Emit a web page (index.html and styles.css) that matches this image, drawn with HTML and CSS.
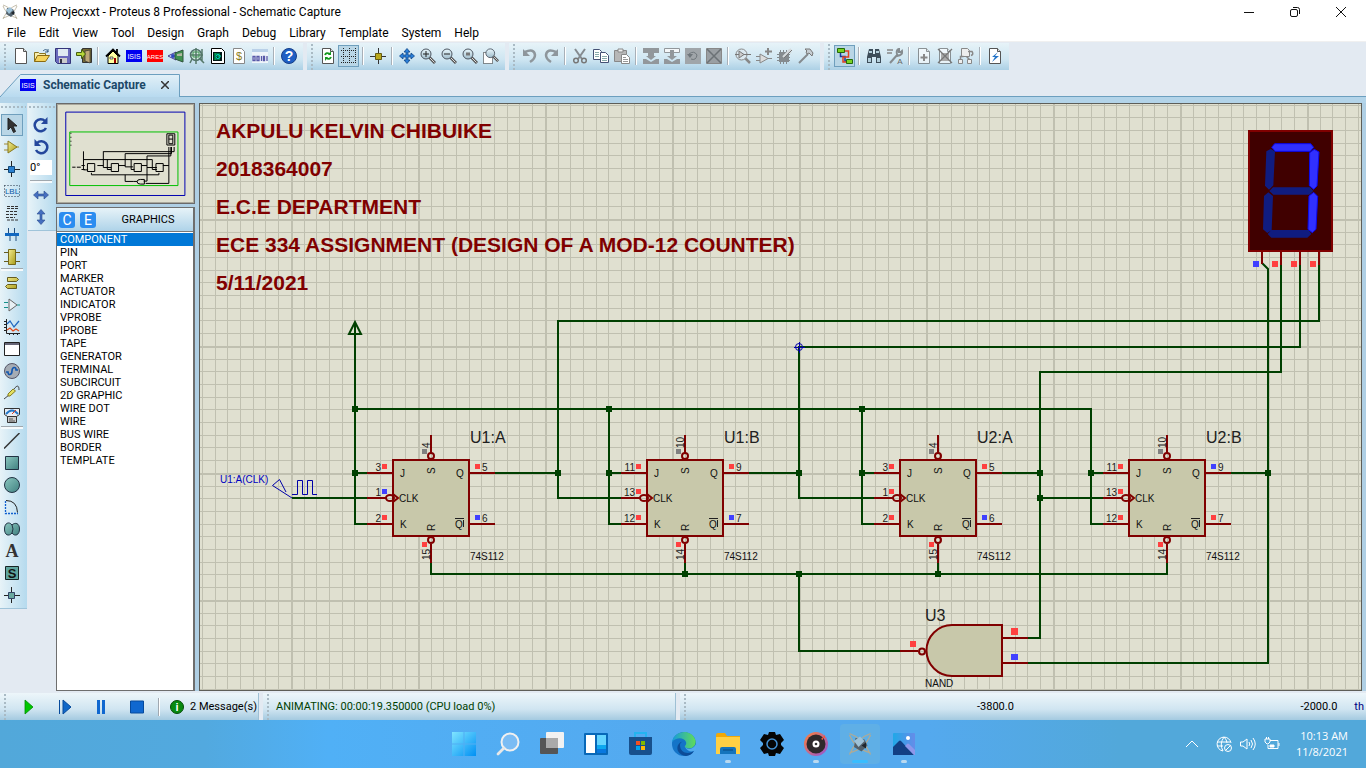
FILE: index.html
```html
<!DOCTYPE html>
<html lang="en">
<head>
<meta charset="utf-8">
<title>New Projecxxt - Proteus 8 Professional - Schematic Capture</title>
<link rel="stylesheet" href="styles.css">
</head>
<body>
<svg class="defs" aria-hidden="true">
  <defs>
    <linearGradient id="glass" x1="0" y1="0" x2="0" y2="1"><stop offset="0" stop-color="#eaf8fd"/><stop offset="1" stop-color="#9fbccb"/></linearGradient>
    <linearGradient id="teal" x1="0" y1="0" x2="1" y2="1"><stop offset="0" stop-color="#8cc8c0"/><stop offset="1" stop-color="#3f8080"/></linearGradient>
    <linearGradient id="gold" x1="0" y1="0" x2="1" y2="1"><stop offset="0" stop-color="#f4ec90"/><stop offset="1" stop-color="#a89c18"/></linearGradient>
    <symbol id="page" viewBox="0 0 16 16"><path d="M2.500 .500h8l3 3v12h-11z" fill="#fff" stroke="#555"/><path d="M10.500 .500v3h3" fill="#ddd" stroke="#555"/></symbol>
    <symbol id="lens" viewBox="0 0 16 16"><path d="M9.500 9.500l5.500 5.500" stroke="#555" stroke-width="3"/><path d="M10 10l4.500 4.500" stroke="#ddd"/><circle cx="6" cy="6" r="5" fill="url(#glass)" stroke="#4c5560"/></symbol>
    <symbol id="isis" viewBox="0 0 16 12"><path d="M0 0h16v12H0z" fill="#0000f0"/><text class="badge-text" x="8" y="9">ISIS</text></symbol>
    <symbol id="proteus" viewBox="0 0 16 16"><path d="M1 1c6 2 11 7 14 14M15 1C9 3 4 8 1 15M1 2c3 7 7 10 14 12M15 2C12 9 8 12 1 14" fill="none" stroke="#b3aa92" stroke-width=".8"/><path d="M5 4l6 1 2 4-4 4-5-3z" fill="#52606b"/><path d="M4 6l4-3 3 3-4 4z" fill="#9ec2d8"/><path d="M9 9l3-2v4z" fill="#20262c"/></symbol>
    <symbol id="flipflop" viewBox="-30 -30 140 140">
      <g fill="none" stroke="#800000" stroke-width="2">
        <path d="M-26 13H0M-26 38h20M-26 64H0M76 13h26M76 64h26M38-25V-7M38 84v19"/>
        <rect width="76" height="76" fill="#c8c8aa"/>
        <circle cx="38" cy="-4" r="3"/><circle cx="38" cy="80" r="3"/><ellipse cx="-3" cy="38" rx="4" ry="3"/><path d="M0 34l5 4-5 4"/>
      </g>
      <g class="pin-name"><text x="7" y="17">J</text><text x="6" y="42">CLK</text><text x="7" y="68">K</text><text x="63" y="17">Q</text><text x="62" y="68">Q</text><text transform="translate(42 14) rotate(-90)">S</text><text transform="translate(42 71) rotate(-90)">R</text></g>
      <path d="M62 58.500h9M70.500 60v7" stroke="#202020"/>
    </symbol>
    <pattern id="grid" patternUnits="userSpaceOnUse" x="291" y="346" width="127" height="127">
      <rect width="127" height="127" fill="#e0e0d0"/>
      <path d="M13.500 0v127M25.500 0v127M38.500 0v127M51.500 0v127M63.500 0v127M76.500 0v127M89.500 0v127M101.500 0v127M114.500 0v127M0 13.500h127M0 25.500h127M0 38.500h127M0 51.500h127M0 63.500h127M0 76.500h127M0 89.500h127M0 101.500h127M0 114.500h127" stroke="#c0c0b0"/>
      <path d="M1 0v127M0 1h127" stroke="#c0c0b0" stroke-width="2"/>
    </pattern>
  </defs>
</svg>

<header class="titlebar">
  <svg class="app-icon" viewBox="0 0 16 16"><use href="#proteus"/></svg>
  <h1 class="title">New Projecxxt - Proteus 8 Professional - Schematic Capture</h1>
  <div class="window-buttons">
    <button aria-label="Minimize"><svg viewBox="0 0 12 12"><path d="M1 6.500h10"/></svg></button>
    <button aria-label="Restore"><svg viewBox="0 0 12 12"><rect x="1.500" y="3.500" width="7" height="7" rx="1.500"/><path d="M4 1.500h4.500a2 2 0 0 1 2 2V8"/></svg></button>
    <button aria-label="Close"><svg viewBox="0 0 12 12"><path d="M1 1l10 10M11 1L1 11"/></svg></button>
  </div>
</header>

<nav class="menubar">
  <button>File</button><button>Edit</button><button>View</button><button>Tool</button><button>Design</button><button>Graph</button><button>Debug</button><button>Library</button><button>Template</button><button>System</button><button>Help</button>
</nav>

<div class="toolbars">
  <div class="toolbar">
    <button aria-label="New project"><svg viewBox="0 0 16 16"><use href="#page"/></svg></button>
    <button aria-label="Open project"><svg viewBox="0 0 16 16"><path d="M.5 13.500v-9h4l1 1h6v2" fill="#f8efb0" stroke="#8a7420"/><path d="M.5 13.500l3-6h12l-4 6z" fill="#f6d45c" stroke="#8a6a10"/><path d="M9 3c2-2 4-2 5 1m0-3v3h-3" fill="none" stroke="#345a80"/></svg></button>
    <button aria-label="Save project"><svg viewBox="0 0 16 16"><path d="M.5 .500h15v15h-13l-2-2z" fill="#6a6abc" stroke="#35357a"/><path d="M3 1h10v7H3z" fill="#dfeaf2"/><path d="M4 10h8v5H4z" fill="#ccc"/><path d="M5 11h2v4H5z" fill="#334"/></svg></button>
    <button aria-label="Close project"><svg viewBox="0 0 16 16"><path d="M6.500 .500h9v14h-9z" fill="#766a34" stroke="#333"/><path d="M9 3l5-1v13l-5-2z" fill="#bda878" stroke="#333" stroke-width=".7"/><path d="M.5 4.500h5v-3l4 4.500-4 4.500v-3h-5z" fill="#b7d83c" stroke="#466010"/></svg></button>
    <i class="sep"></i>
    <button aria-label="Home"><svg viewBox="0 0 16 16"><path d="M3 8v7.500h10V8L8 3z" fill="#ffffa0" stroke="#000"/><path d="M1 8.500l7-7 7 7M12 5V1" fill="none" stroke="#000" stroke-width="1.800"/><path d="M9 10h2v5H9z" fill="#900"/><path d="M5 9h3v2H5z" fill="#fff" stroke="#000" stroke-width=".6"/></svg></button>
    <button aria-label="Schematic capture"><svg viewBox="0 0 16 16"><use href="#isis" y="2" width="16" height="12"/></svg></button>
    <button aria-label="PCB layout"><svg viewBox="0 0 16 16"><path d="M0 2h16v12H0z" fill="#f00"/><text class="badge-text small" x="8" y="11">ARES</text></svg></button>
    <button aria-label="3D viewer"><svg viewBox="0 0 16 16"><path d="M0 8l8-4v8z" fill="#dce8ff" stroke="#443a90"/><circle cx="5" cy="8" r="2" fill="#3048c0"/><path d="M7 5l8-3v12l-8-3z" fill="#3f9150" stroke="#30543c"/><path d="M9 6l5-1v3L9 8z" fill="#b0b8a0"/></svg></button>
    <button aria-label="Gerber viewer"><svg viewBox="0 0 16 16"><circle cx="7" cy="7" r="5.500" fill="#d8eee4" stroke="#52746c" stroke-width="1.500"/><path d="M7 0v16M1 7h13M13 1v12M3 11l-2 4M10 10l5 5" fill="none" stroke="#55786a" stroke-width="1.500"/><path d="M4 4h6v5H4z" fill="none" stroke="#3c9050"/></svg></button>
    <button aria-label="Design explorer"><svg viewBox="0 0 16 16"><path d="M1.500 .500h10l3 3v12h-13z" fill="#fff" stroke="#000"/><path d="M3 4h9v9H3z" fill="#001818"/><path d="M5 5v7M5 6h3M5 11h3M9 5v7M7 8h4" stroke="#00c860"/><circle cx="8" cy="8.500" r="2" fill="none" stroke="#00d8d0"/></svg></button>
    <button aria-label="Bill of materials"><svg viewBox="0 0 16 16"><path d="M2.500 .500h8l3 3v12h-11z" fill="#fff" stroke="#888"/><text class="dollar" x="8" y="12">$</text></svg></button>
    <button aria-label="Source code"><svg viewBox="0 0 16 16"><path d="M0 1h16v14H0z" fill="#eef4fa"/><path d="M0 1h16v3H0z" fill="#b9d0e8"/><path d="M1 8.500v4h2v-4zM5 12.500V8.500h2v4zM9.500 8v5M11.500 8.500h1v4h-1zM15 8v5" fill="none" stroke="#5858a8" stroke-width="1.300"/></svg></button>
    <i class="sep"></i>
    <button aria-label="Help"><svg viewBox="0 0 16 16"><circle cx="8" cy="8" r="7.500" fill="#1f5fc4" stroke="#163e88"/><text class="question" x="8" y="13">?</text></svg></button>
  </div>
  <div class="toolbar">
    <button aria-label="Redraw"><svg viewBox="0 0 16 16"><use href="#page"/><path d="M5 7q1-3 5-1M11 9q-1 3-5 1" fill="none" stroke="#159a20" stroke-width="1.800"/><path d="M11 3v4H8zM5 13V9h3z" fill="#159a20"/></svg></button>
    <button class="active" aria-label="Toggle grid"><svg viewBox="0 0 16 16"><path d="M2.500 0v16M8.500 0v16M14.500 0v16M0 2.500h16M0 8.500h16M0 14.500h16" stroke="#222" stroke-dasharray="1 1"/></svg></button>
    <i class="sep"></i>
    <button aria-label="Toggle origin"><svg viewBox="0 0 16 16"><path d="M8.500 0v16M0 8.500h16" stroke="#333"/><path d="M5.500 5.500h6v6h-6z" fill="#b9a91c" stroke="#665c10"/></svg></button>
    <i class="sep"></i>
    <button aria-label="Center at cursor"><svg viewBox="0 0 16 16"><path d="M8 .500l3 3.500H9v3h3V5l3.500 3-3.500 3V9H9v3h2l-3 3.500L5 12h2V9H4v2L.5 8 4 5v2h3V4H5z" fill="#2b7fd8" stroke="#104888" stroke-width=".8"/></svg></button>
    <button aria-label="Zoom in"><svg viewBox="0 0 16 16"><use href="#lens"/><path d="M3 6h6M6 3v6" stroke="#222"/></svg></button>
    <button aria-label="Zoom out"><svg viewBox="0 0 16 16"><use href="#lens"/><path d="M3 6h6" stroke="#222"/></svg></button>
    <button aria-label="Zoom to sheet"><svg viewBox="0 0 16 16"><use href="#lens"/><path d="M4 4.500h4v3H4z" fill="#777"/></svg></button>
    <button aria-label="Zoom to area"><svg viewBox="0 0 16 16"><path d="M.5 4.500h9v11h-9z" fill="#fff" stroke="#222" stroke-dasharray="1 1"/><use href="#lens" x="2" y="0" width="14" height="14"/></svg></button>
  </div>
  <div class="toolbar">
    <button aria-label="Undo"><svg viewBox="0 0 16 16"><path d="M3 4q9-4 10 3 0 4-5 7" fill="none" stroke="#8e969c" stroke-width="2.500"/><path d="M1 1v7h7z" fill="#8e969c"/></svg></button>
    <button aria-label="Redo"><svg viewBox="0 0 16 16"><path d="M13 4Q4 0 3 7q0 4 5 7" fill="none" stroke="#8e969c" stroke-width="2.500"/><path d="M15 1v7H8z" fill="#8e969c"/></svg></button>
    <i class="sep"></i>
    <button aria-label="Cut"><svg viewBox="0 0 16 16"><path d="M3 1l7 10M13 1L6 11" stroke="#858b90" stroke-width="2"/><circle cx="4" cy="12.500" r="2.300" fill="none" stroke="#777" stroke-width="1.500"/><circle cx="12" cy="12.500" r="2.300" fill="none" stroke="#777" stroke-width="1.500"/></svg></button>
    <button aria-label="Copy"><svg viewBox="0 0 16 16"><path d="M.5 1.500h6l2 2v8h-8z" fill="#fff" stroke="#445074"/><path d="M2 4.500h4M2 6.500h4M2 8.500h4" stroke="#8aa"/><path d="M7.500 4.500h5l3 3v7h-8z" fill="#fff" stroke="#445074"/><path d="M9 8.500h5M9 10.500h5M9 12.500h5" stroke="#8aa"/></svg></button>
    <button aria-label="Paste"><svg viewBox="0 0 16 16"><path d="M.5 2.500h12v11H.5z" fill="#b7b7b7" stroke="#888"/><path d="M4 1h5v3H4z" fill="#eee" stroke="#888"/><path d="M7.500 6.500h5l3 3v6h-8z" fill="#fff" stroke="#888"/><path d="M9 9.500h3M9 11.500h5M9 13.500h5" stroke="#999"/></svg></button>
    <i class="sep"></i>
    <button aria-label="Block copy"><svg viewBox="0 0 16 16"><path d="M0 0h16v5h-5v3h2l-5 4-5-4h2V5H0zM0 11h3l5 3 5-3h3v5H0z" fill="#92979b"/></svg></button>
    <button aria-label="Block move"><svg viewBox="0 0 16 16"><path d="M.5 .500h15v4h-15z" fill="#f4f7f9" stroke="#92979b"/><path d="M6 2h4v6h3l-5 4-5-4h3zM0 11h3l5 3 5-3h3v5H0z" fill="#92979b"/></svg></button>
    <button aria-label="Block rotate"><svg viewBox="0 0 16 16"><path d="M0 0h16v16H0z" fill="#a0a5a9"/><path d="M4 6q5-4 8 1-1 6-6 4" fill="none" stroke="#70777c"/><path d="M2 6h6l-3 4z" fill="#70777c"/></svg></button>
    <button aria-label="Block delete"><svg viewBox="0 0 16 16"><path d="M.5 .500h15v15H.5z" fill="#9a9fa3" stroke="#888"/><path d="M1 1l14 14M15 1L1 15" stroke="#6c7276" stroke-width="1.500"/></svg></button>
    <i class="sep"></i>
    <button aria-label="Pick parts"><svg viewBox="0 0 16 16"><path d="M10 10l5 5" stroke="#888" stroke-width="2.500"/><circle cx="6.500" cy="6.500" r="5.500" fill="#dbe8ef" stroke="#888"/><path d="M4 3l5 3.500-5 3.500zM0 6.500h4M9 6.500h7" fill="#ccc" stroke="#777"/></svg></button>
    <button aria-label="Make device"><svg viewBox="0 0 16 16"><path d="M4 6l8 4.500-8 4.500zM0 8.500h4M0 12.500h4M12 10.500h4" fill="#ddd" stroke="#888"/><path d="M12 0v7M9 3.500h7" stroke="#888" stroke-width="2"/></svg></button>
    <button aria-label="Packaging tool"><svg viewBox="0 0 16 16"><path d="M2 4h10v10H2z" fill="#858b8f"/><path d="M3.500 2v14M6.500 2v14M9.500 2v14M0 6.500h13M0 9.500h13M0 12.500h13" stroke="#858b8f"/><path d="M6 9l6-6 2-2M14 5l-3-3" stroke="#d5dadd" stroke-width="2"/><path d="M7 10l8-8" stroke="#777"/></svg></button>
    <button aria-label="Decompose"><svg viewBox="0 0 16 16"><path d="M1 15L10 6" stroke="#858b8f" stroke-width="2"/><path d="M7 1l5 0 3 4-1 3-3-3-2 1-1-2 1-1z" fill="#c5cdd2" stroke="#777"/></svg></button>
  </div>
  <div class="toolbar">
    <button class="active" aria-label="Wire autorouter"><svg viewBox="0 0 16 16"><path d="M7 4H3.500v4.500H8V13h2" fill="none" stroke="#173a9c" stroke-width="1.500"/><path d="M7 3h4.500v6H6v5h4" fill="none" stroke="#df4020" stroke-width="1.500"/><path d="M.5 .500h7v4h-7zM9.500 11.500h6v4h-6z" fill="#79d324" stroke="#236808"/></svg></button>
    <i class="sep"></i>
    <button aria-label="Search and tag"><svg viewBox="0 0 16 16"><path d="M3 1h4v5h2V1h4l2 8v6h-5V9H6v6H1V9z" fill="#3d4d59"/><path d="M3 3h3v2H3zM10 3h3v2h-3zM2 10h3v4H2zM11 10h3v4h-3z" fill="#b4cfdb"/></svg></button>
    <button aria-label="Property assignment"><svg viewBox="0 0 16 16"><path d="M0 2h6M0 5h5" stroke="#888" stroke-width="1.500"/><path d="M3 15l8-9M10 6q-1-4 2-5v3h2l1-1q1 4-5 5" fill="none" stroke="#858b8f" stroke-width="2"/><text class="prop-mark" x="13" y="16">A</text></svg></button>
    <i class="sep"></i>
    <button aria-label="New sheet"><svg viewBox="0 0 16 16"><use href="#page" opacity=".6"/><path d="M8 6v7M4.500 9.500h7" stroke="#888" stroke-width="2"/></svg></button>
    <button aria-label="Remove sheet"><svg viewBox="0 0 16 16"><use href="#page" opacity=".6"/><path d="M4 5h8v8H4z" fill="#aaa"/><path d="M1 1l14 14M15 1L1 15" stroke="#777" stroke-width="1.300"/></svg></button>
    <button aria-label="Exit to parent"><svg viewBox="0 0 16 16"><path d="M3.500 .500h6l2 2v6h-8zM.5 11.500h4v4h-4zM9.500 11.500h4v4h-4z" fill="#eee" stroke="#888"/><path d="M10 3.500h4q2 3-1 4M2.500 11V8.500h3M8.500 8.500l3 3" fill="none" stroke="#888" stroke-width="1.500"/></svg></button>
    <i class="sep"></i>
    <button aria-label="Electrical rules check"><svg viewBox="0 0 16 16"><use href="#page"/><path d="M11 4L5 9h3l-3 5 7-6H8z" fill="#2474c8"/></svg></button>
  </div>
</div>

<div class="tabs">
  <div class="tab">
    <svg class="tab-shape" viewBox="0 0 180 23" preserveAspectRatio="none"><defs><linearGradient id="tabfill" x1="0" y1="0" x2="0" y2="1"><stop offset="0" stop-color="#e2f0f8"/><stop offset="1" stop-color="#b8daef"/></linearGradient></defs><path d="M0 23L20.500 .500h159V23" fill="url(#tabfill)" stroke="#6c9fbf"/></svg>
    <svg class="tab-icon" viewBox="0 0 16 12"><use href="#isis"/></svg>
    <a class="tab-name" href="#schematic">Schematic Capture</a>
    <button class="tab-close" aria-label="Close tab"><svg viewBox="0 0 8 8"><path d="M0 0l8 8M8 0L0 8" stroke="#333" stroke-width="1.500"/></svg></button>
  </div>
</div>

<main class="workspace">
  <div class="rail modes">
    <button class="active" aria-label="Selection mode"><svg viewBox="0 0 16 16"><path d="M4 1v12l3-3 2.500 5.500 2-1L9 9h4z" fill="#333" stroke="#222"/></svg></button>
    <button aria-label="Component mode"><svg viewBox="0 0 16 16"><path d="M0 5h4M0 11h4M12 8h3" stroke="#a28a30"/><path d="M4 2l9 6-9 6z" fill="url(#gold)" stroke="#8a7a20"/></svg></button>
    <button aria-label="Junction dot mode"><svg viewBox="0 0 16 16"><path d="M7.500 0v16M0 8.500h16" stroke="#222"/><path d="M4.500 5.500h6v6h-6z" fill="#2a80d0" stroke="#124878"/></svg></button>
    <button aria-label="Wire label mode"><svg viewBox="0 0 16 16"><path d="M.5 2.500h15v11H.5z" fill="none" stroke="#234" stroke-dasharray="1 2"/><text class="label-glyph" x="8" y="11">LBL</text></svg></button>
    <button aria-label="Text script mode"><svg viewBox="0 0 16 16"><path d="M3 1.500h11M3 3.500h11M2 6.500h12M2 9.500h12M2 12.500h9M3 15h11" stroke="#333" stroke-dasharray="3 1"/></svg></button>
    <button aria-label="Buses mode"><svg viewBox="0 0 16 16"><path d="M4.500 1v6M10.500 1v6M6 8v6M12 8v6" stroke="#234e7c"/><path d="M1 7.500h14" stroke="#1268c0" stroke-width="3"/></svg></button>
    <button aria-label="Subcircuit mode"><svg viewBox="0 0 16 16"><path d="M0 3.500h16M0 12.500h16" stroke="#665c20"/><path d="M4.500 .500h7v15h-7z" fill="url(#gold)" stroke="#75691c"/></svg></button>
    <i class="sep"></i>
    <button aria-label="Terminals mode"><svg viewBox="0 0 16 16"><path d="M3.500 2.500h9l2 2-2 2h-9zM12.500 9.500h-9l-2 2 2 2h9z" fill="url(#gold)" stroke="#665c20"/></svg></button>
    <button aria-label="Device pins mode"><svg viewBox="0 0 16 16"><path d="M0 5.500h4M0 10.500h4M13 8h3" stroke="#159088"/><path d="M5 2l8 6-8 6z" fill="#e8f0f4" stroke="#666"/></svg></button>
    <button aria-label="Graph mode"><svg viewBox="0 0 16 16"><path d="M2.500 0v14.500H16M0 2.500h2M0 5.500h2M0 8.500h2M0 11.500h2M5.500 15v1M9.500 15v1M13.500 15v1" stroke="#222" fill="none"/><path d="M3 5l3-3 4 6 5-6" stroke="#2068c0" stroke-width="1.300" fill="none"/><path d="M3 11l3-2 3 3 3-2 3 2" stroke="#e04818" stroke-width="1.300" fill="none"/></svg></button>
    <button aria-label="Active popup mode"><svg viewBox="0 0 16 16"><path d="M.5 1.500h15v13H.5z" fill="#fff" stroke="#222"/><path d="M1 2h14v2H1z" fill="#667"/></svg></button>
    <button aria-label="Generator mode"><svg viewBox="0 0 16 16"><circle cx="8" cy="8" r="7.500" fill="#a5acb4" stroke="#556"/><path d="M2 9h2c0 4 4 3 4-1s4-5 4-1h2" stroke="#1258b0" stroke-width="1.600" fill="none"/></svg></button>
    <button aria-label="Probe mode"><svg viewBox="0 0 16 16"><path d="M0 14l5-4M10 4c3-4 5-4 5 1" fill="none" stroke="#444"/><path d="M4 9l5-5 2.500 2-5.500 5-2 0z" fill="#e4e060" stroke="#847b20"/></svg></button>
    <button aria-label="Instruments mode"><svg viewBox="0 0 16 16"><path d="M.5 1.500h15v6l-3 2h-9l-3-2z" fill="#e8edf5" stroke="#333"/><path d="M2 7q6-7 12 0" fill="none" stroke="#2478c8" stroke-width="2"/><path d="M8 7l4-4" stroke="#e04020"/><path d="M3.500 9.500h9v6h-9z" fill="#ccc" stroke="#333"/><path d="M5 12h4M5 14h6" stroke="#555"/></svg></button>
    <i class="sep"></i>
    <button aria-label="Line"><svg viewBox="0 0 16 16"><path d="M0 15.500L15.500 0" stroke="#333" stroke-width="1.500"/></svg></button>
    <button aria-label="Box"><svg viewBox="0 0 16 16"><path d="M1.500 1.500h13v13h-13z" fill="url(#teal)" stroke="#234"/></svg></button>
    <button aria-label="Circle"><svg viewBox="0 0 16 16"><circle cx="8" cy="8" r="7.500" fill="url(#teal)" stroke="#234"/></svg></button>
    <button aria-label="Arc"><svg viewBox="0 0 16 16"><path d="M1.500 2v12.500H14" fill="none" stroke="#1060d0" stroke-width="1.300" stroke-dasharray="2 1"/><path d="M2 1.500q11 0 11.500 12" fill="none" stroke="#222"/></svg></button>
    <button aria-label="Closed path"><svg viewBox="0 0 16 16"><path d="M8 4C5 0 .5 2 .5 8s4 8 7.500 4c3 4 7.500 2 7.500-4S11 1 8 4z" fill="url(#teal)" stroke="#234"/><path d="M8 4q2 4 0 8" fill="none" stroke="#234"/></svg></button>
    <button class="text-tool" aria-label="Text">A</button>
    <button aria-label="Symbols"><svg viewBox="0 0 16 16"><path d="M1.500 1.500h13v13h-13z" fill="#5fa59e" stroke="#182424"/><text class="symbol-mark" x="8" y="13">S</text></svg></button>
    <button aria-label="Markers"><svg viewBox="0 0 16 16"><path d="M7.500 0v16M0 8.500h16" stroke="#222"/><path d="M4.500 5.500h6v6h-6z" fill="#6aa8a0" stroke="#346"/></svg></button>
  </div>
  <div class="rail orientation">
    <button aria-label="Rotate clockwise"><svg viewBox="0 0 16 16"><path d="M13 11a6 6 0 1 1-1-7" fill="none" stroke="#23479c" stroke-width="2.500"/><path d="M14.500 0v7H8z" fill="#23479c"/></svg></button>
    <button aria-label="Rotate anticlockwise"><svg viewBox="0 0 16 16"><path d="M3 11a6 6 0 1 0 1-7" fill="none" stroke="#23479c" stroke-width="2.500"/><path d="M1.500 0v7H8z" fill="#23479c"/></svg></button>
    <input class="angle" aria-label="Angle" value="0°">
    <i class="sep"></i>
    <button aria-label="Mirror horizontally"><svg viewBox="0 0 16 16"><path d="M.5 8L5 4v3h6V4l4.500 4L11 12V9H5v3z" fill="#456fc0" stroke="#2a4a8c" stroke-width=".6"/></svg></button>
    <button aria-label="Mirror vertically"><svg viewBox="0 0 16 16"><path d="M8 .500L12 5H9v6h3l-4 4.500L4 11h3V5H4z" fill="#456fc0" stroke="#2a4a8c" stroke-width=".6"/></svg></button>
  </div>

  <aside class="side">
    <div class="overview">
      <svg viewBox="170 10 414 300" fill="none" stroke="#000" stroke-width="3" role="img" aria-label="Sheet overview">
        <path d="M196.500 34.500h360v252h-360z" stroke="#0000b0"/><path d="M208.500 94.500h327v162h-327z" stroke="#00c000"/>
        <path d="M212 97v42" stroke-dasharray="3 9"/>
        <path d="M502 100h24v34h-24zM508 104h12v26h-12zM508 116h12M250 153v56h14M250 178h208v30h14M310 153v49h24M310 154h214v-14M292 196h18M322 178v30h12M376 160v40h24M376 160h140v-20M356 196h20M394 178v30h10M442 167v76h-10M442 167h72v-27M426 196h16M442 202h30M508 140v110h-70M490 196h18M274 218v6h204v-6M376 224v20h26"/>
        <path d="M262 190h22v24h-22zM334 190h22v24h-22zM403 190h22v24h-22zM469 190h22v24h-22zM434 238h-12q-10 0-10 7t10 7h12zM216 201h10m4 0h12M244 196h10M244 208h10M402 244h10"/>
      </svg>
    </div>
    <section class="picker">
      <header class="picker-head">
        <button class="chip" aria-label="C">C</button><button class="chip" aria-label="E">E</button>
        <h2>GRAPHICS</h2>
      </header>
      <ul class="picker-list">
        <li class="selected">COMPONENT</li><li>PIN</li><li>PORT</li><li>MARKER</li><li>ACTUATOR</li><li>INDICATOR</li><li>VPROBE</li><li>IPROBE</li><li>TAPE</li><li>GENERATOR</li><li>TERMINAL</li><li>SUBCIRCUIT</li><li>2D GRAPHIC</li><li>WIRE DOT</li><li>WIRE</li><li>BUS WIRE</li><li>BORDER</li><li>TEMPLATE</li>
      </ul>
    </section>
  </aside>

  <section class="canvas" id="schematic">
    <svg class="sheet" role="img" aria-label="MOD-12 counter schematic">
      <g transform="translate(-200 -104)">
        <rect x="200" y="104" width="4000" height="3000" fill="url(#grid)"/>
        <g class="heading">
          <text x="216" y="138">AKPULU KELVIN CHIBUIKE</text>
          <text x="216" y="176">2018364007</text>
          <text x="216" y="214">E.C.E DEPARTMENT</text>
          <text x="216" y="252">ECE 334 ASSIGNMENT (DESIGN OF A MOD-12 COUNTER)</text>
          <text x="216" y="290">5/11/2021</text>
        </g>

        <g class="wires">
          <path d="M355 322V524H367M355 473H367M355 409H1091V524H1103M1091 473H1103M292 498H367"/>
          <path d="M355 322l-6 12h12z"/>
          <path d="M495 473H558M621 498H558V321H1319V265"/>
          <path d="M609 409V524H621M609 473H621M862 409V524H875M862 473H875"/>
          <path d="M749 473H799M875 498H799V347H1300V265"/>
          <path d="M1002 473H1040M1103 498H1040M1028 638H1040V372H1281V265"/>
          <path d="M1231 473H1268M1262 263L1268 269V663H1028"/>
          <path d="M431 563V574H1167V563M685 563V574M938 563V574M799 574V651H900"/>
        </g>
        <path class="junctions" d="M355 406v6M355 470v6M558 470v6M609 406v6M609 470v6M799 470v6M862 406v6M862 470v6M1040 470v6M1040 495v6M1091 470v6M1268 470v6M685 571v6M799 571v6M938 571v6"/>

        <g fill="none" stroke="#0000a8">
          <circle cx="799" cy="347" r="3.500"/><path d="M794 347.500h11M799.500 342v11"/>
          <path d="M292 498L272.500 485.500L279.500 479.500L286 492M292 494.500H297.500V480.500H302.500V494.500H307.500V480.500H312.500V494.500H317"/>
        </g>
        <text class="generator" x="220" y="483">U1:A(CLK)</text>

        <g transform="translate(393 460)">
          <use href="#flipflop" x="-30" y="-30" width="140" height="140"/>
          <path class="high" d="M-11 4h5v5h-5zM-11 55h5v5h-5zM82 4h5v5h-5zM29 82h5v5h-5z"/><path class="low" d="M-11 29h5v5h-5zM82 55h5v5h-5z"/><path class="floating" d="M29-11h5v5h-5z"/>
          <g class="pin-no end"><text x="-12" y="11">3</text><text x="-12" y="36">1</text><text x="-12" y="62">2</text></g>
          <g class="pin-no"><text x="89" y="11">5</text><text x="89" y="62">6</text><text transform="translate(37 -12) rotate(-90)">4</text><text transform="translate(37 100) rotate(-90)">15</text></g>
          <text class="ref" x="77" y="-17">U1:A</text><text class="value" x="77" y="100">74S112</text>
        </g>
        <g transform="translate(647 460)">
          <use href="#flipflop" x="-30" y="-30" width="140" height="140"/>
          <path class="high" d="M-11 4h5v5h-5zM-11 29h5v5h-5zM-11 55h5v5h-5zM82 4h5v5h-5zM29 82h5v5h-5z"/><path class="low" d="M82 55h5v5h-5z"/><path class="floating" d="M29-11h5v5h-5z"/>
          <g class="pin-no end"><text x="-12" y="11">11</text><text x="-12" y="36">13</text><text x="-12" y="62">12</text></g>
          <g class="pin-no"><text x="89" y="11">9</text><text x="89" y="62">7</text><text transform="translate(37 -12) rotate(-90)">10</text><text transform="translate(37 100) rotate(-90)">14</text></g>
          <text class="ref" x="77" y="-17">U1:B</text><text class="value" x="77" y="100">74S112</text>
        </g>
        <g transform="translate(900 460)">
          <use href="#flipflop" x="-30" y="-30" width="140" height="140"/>
          <path class="high" d="M-11 4h5v5h-5zM-11 29h5v5h-5zM-11 55h5v5h-5zM82 4h5v5h-5zM29 82h5v5h-5z"/><path class="low" d="M82 55h5v5h-5z"/><path class="floating" d="M29-11h5v5h-5z"/>
          <g class="pin-no end"><text x="-12" y="11">3</text><text x="-12" y="36">1</text><text x="-12" y="62">2</text></g>
          <g class="pin-no"><text x="89" y="11">5</text><text x="89" y="62">6</text><text transform="translate(37 -12) rotate(-90)">4</text><text transform="translate(37 100) rotate(-90)">15</text></g>
          <text class="ref" x="77" y="-17">U2:A</text><text class="value" x="77" y="100">74S112</text>
        </g>
        <g transform="translate(1129 460)">
          <use href="#flipflop" x="-30" y="-30" width="140" height="140"/>
          <path class="high" d="M-11 4h5v5h-5zM-11 29h5v5h-5zM-11 55h5v5h-5zM82 55h5v5h-5zM29 82h5v5h-5z"/><path class="low" d="M82 4h5v5h-5z"/><path class="floating" d="M29-11h5v5h-5z"/>
          <g class="pin-no end"><text x="-12" y="11">11</text><text x="-12" y="36">13</text><text x="-12" y="62">12</text></g>
          <g class="pin-no"><text x="89" y="11">9</text><text x="89" y="62">7</text><text transform="translate(37 -12) rotate(-90)">10</text><text transform="translate(37 100) rotate(-90)">14</text></g>
          <text class="ref" x="77" y="-17">U2:B</text><text class="value" x="77" y="100">74S112</text>
        </g>

        <g fill="none" stroke="#800000" stroke-width="2">
          <path d="M1002 625H952A25.500 25.500 0 0 0 952 676H1002z" fill="#c8c8aa"/>
          <circle cx="922" cy="651.500" r="3"/><path d="M900 651h18M1002 638h26M1002 663h26"/>
          <rect x="1249" y="131" width="83" height="120" fill="#400000"/>
          <path d="M1262 252v12M1281 252v13M1300 252v13M1319 252v13"/>
        </g>
        <path class="high" d="M910 641h6v6h-6zM1011 628h7v7h-7zM1272 261h6v6h-6zM1291 261h6v6h-6zM1310 261h6v6h-6z"/>
        <path class="low" d="M1011 654h7v6h-7zM1253 261h6v6h-6z"/>
        <text class="ref" x="925" y="621">U3</text><text class="value" x="925" y="687">NAND</text>
        <g transform="translate(1180 100) scale(.33333)">
          <path d="M259 154L272 147L285 154L280 256L267 269L255 257zM268 273L279 262H390L400 273L388 284H280zM252 288L265 277L279 288L275 390L262 399L249 388zM263 402L274 390H386L394 402L382 413H274z" fill="#101c80"/>
          <path d="M275 142L284 131H392L401 142L391 154H286zM389 158L403 148L417 156L411 258L401 268L388 257zM387 288L401 277L413 289L408 388L397 398L384 388z" fill="#3030ff" stroke="#0808f0" stroke-width="3"/>
        </g>
      </g>
    </svg>
  </section>
</main>

<footer class="statusbar">
  <div class="status-seg controls">
    <button aria-label="Run simulation"><svg viewBox="0 0 16 16"><path d="M4 1l8 7-8 7z" fill="#00c800" stroke="#008c00" stroke-width=".8"/></svg></button>
    <button aria-label="Step simulation"><svg viewBox="0 0 16 16"><path d="M2.500 1v14M6 1l8 7-8 7z" fill="#1068c8" stroke="#064a9c"/></svg></button>
    <button aria-label="Pause simulation"><svg viewBox="0 0 16 16"><path d="M4 1h3v14H4zM9 1h3v14H9z" fill="#1068d0"/></svg></button>
    <button aria-label="Stop simulation"><svg viewBox="0 0 16 16"><path d="M1.500 2h13v12h-13z" fill="#1068d0" stroke="#064a9c"/></svg></button>
    <i class="sep"></i>
    <button class="messages"><svg viewBox="0 0 16 16"><circle cx="8" cy="8" r="6.500" fill="#078a10" stroke="#034c08"/><text class="info-mark" x="8" y="12">i</text></svg>2 Message(s)</button>
  </div>
  <div class="status-seg progress"><output>ANIMATING: 00:00:19.350000 (CPU load 0%)</output></div>
  <div class="status-seg coords"><span class="coord-x">-3800.0</span><span>-2000.0</span><span class="unit">th</span></div>
</footer>

<div class="taskbar">
  <div class="apps">
    <button aria-label="Start"><svg viewBox="0 0 24 24"><defs><linearGradient id="win" x1="0" y1="0" x2="1" y2="1"><stop offset="0" stop-color="#7fe4ff"/><stop offset="1" stop-color="#0090f4"/></linearGradient></defs><path d="M0 0h11.500v11.500H0zM12.500 0H24v11.500H12.500zM0 12.500h11.500V24H0zM12.500 12.500H24V24H12.500z" fill="url(#win)"/></svg></button>
    <button aria-label="Search"><svg viewBox="0 0 24 24"><circle cx="14" cy="10" r="8.500" fill="#7abcf4" stroke="#f0f0f0" stroke-width="2"/><path d="M8 16l-6 6" stroke="#e8e8e8" stroke-width="2.800" stroke-linecap="round"/></svg></button>
    <button aria-label="Task view"><svg viewBox="0 0 24 24"><rect x="6" width="18" height="16" rx="1" fill="#f2f2f2"/><rect y="6" width="18" height="16" rx="1" fill="#555"/><path d="M6 6h12v10H6z" fill="#aaa"/></svg></button>
    <button aria-label="Widgets"><svg viewBox="0 0 24 24"><rect y="1" width="24" height="22" rx="1" fill="#0868b8"/><path d="M2 3h9v18H2z" fill="#fff"/><path d="M13 3h9v10h-9z" fill="#64d4ff"/><path d="M13 13h9v4h-9z" fill="#0ca8f0"/><path d="M13 17h9v4h-9z" fill="#0878e0"/></svg></button>
    <button aria-label="Store"><svg viewBox="0 0 24 24"><path d="M7 6V1h11v5" fill="none" stroke="#24b4f0" stroke-width="2"/><path d="M1 5h23v16q0 2-2 2H3q-2 0-2-2z" fill="#18508c"/><path d="M8 9h4v4H8z" fill="#f25022"/><path d="M13 9h4v4h-4z" fill="#7fba00"/><path d="M8 14h4v4H8z" fill="#00a4ef"/><path d="M13 14h4v4h-4z" fill="#ffb900"/></svg></button>
    <button aria-label="Edge"><svg viewBox="0 0 24 24"><defs><linearGradient id="edge"><stop offset="0" stop-color="#159adc"/><stop offset="1" stop-color="#60dc58"/></linearGradient></defs><circle cx="12" cy="12" r="12" fill="#1474c8"/><path d="M0 10C2-1 18-4 23 7c3 7-5 12-10 8-1-1 2-2 1-5C12 5 4 5 0 10z" fill="url(#edge)"/><path d="M8 13c0 8 8 10 14 6-4 7-13 6-16 0-2-5 1-9 6-10-3 1-4 2-4 4z" fill="#0c4c98"/><path d="M13 15c4 4 9 1 11-3v6q-7 4-11-3z" fill="#54acf0"/></svg></button>
    <button class="open" aria-label="File Explorer"><svg viewBox="0 0 24 24"><path d="M0 3q0-2 2-2h7l2 3h13v18H0z" fill="#f0a808"/><path d="M0 5h24v17H0z" fill="#ffd044"/><path d="M4 22v-5q0-2 2-2h12q2 0 2 2v5z" fill="#1474bc"/><path d="M7 18h10" stroke="#0c5794" stroke-width="1.500"/></svg></button>
    <button aria-label="Settings"><svg viewBox="0 0 24 24"><path d="M9 0h6l1 3 4-1 4 6-3 3v2l3 3-4 6-4-1-1 3H9l-1-3-4 1-4-6 3-3v-2L0 8l4-6 4 1z" fill="#050505"/><circle cx="12" cy="12" r="5" fill="#060606" stroke="#4494d8" stroke-width="1.500"/></svg></button>
    <button class="open" aria-label="Music"><svg viewBox="0 0 24 24"><defs><linearGradient id="disc" x1="0" y1="0" x2="1" y2="1"><stop offset="0" stop-color="#ff8038"/><stop offset="1" stop-color="#9054d8"/></linearGradient></defs><circle cx="12" cy="12" r="12" fill="url(#disc)"/><circle cx="12" cy="12" r="9.500" fill="#2e292c"/><circle cx="12" cy="12" r="3.500" fill="#fff"/><circle cx="12" cy="12" r="1.300" fill="#333"/><path d="M17 7l4-4v3h-2v2z" fill="#ee5b40"/></svg></button>
    <button class="open current" aria-label="Proteus"><svg viewBox="0 0 16 16"><use href="#proteus"/></svg></button>
    <button class="open" aria-label="Photos"><svg viewBox="0 0 24 24"><defs><linearGradient id="photo"><stop offset="0" stop-color="#20a8e8"/><stop offset="1" stop-color="#668ce8"/></linearGradient></defs><rect x="1" y="1" width="22" height="22" rx="1" fill="url(#photo)"/><path d="M1 15l6-6q1-1 2 0l13 14H1z" fill="#123f84"/><path d="M13 14l2-2q1-1 2 0l6 6v5h-1z" fill="#8e97ea"/><circle cx="16" cy="6" r="2" fill="#fff"/></svg></button>
  </div>
  <div class="tray">
    <button class="chevron" aria-label="Show hidden icons"><svg viewBox="0 0 16 16"><path d="M2 11l6-6 6 6"/></svg></button>
    <button aria-label="Network"><svg viewBox="0 0 16 16"><path d="M7 15A7 7 0 1 1 15 7M1 6h13M1 10h6M8 1q-5 7-1 14M8 1q3 3 3 6"/><circle cx="12" cy="12" r="3.500"/><path d="M9.500 14.500l5-5"/></svg></button>
    <button aria-label="Volume"><svg viewBox="0 0 16 16"><path d="M.5 6v4H3l4 3V3L3 6zM9 6q1.500 2 0 4M11 4q3 4 0 8M13 2q4.500 6 0 12"/></svg></button>
    <button aria-label="Battery"><svg viewBox="0 0 16 16"><path d="M6 4.500h8v8H4V9M15 7v3M1 3h5v3L4 8H3L1 6zM2.500 1v2M4.500 1v2"/><path d="M6 9h4v2H6z" fill="#fff"/></svg></button>
    <time class="clock" datetime="2021-11-08T10:13"><span>10:13 AM</span><span>11/8/2021</span></time>
  </div>
</div>
</body>
</html>
```
FILE: styles.css
```css
* { box-sizing: border-box; }

body {
  margin: 0;
  height: 100vh;
  display: flex;
  flex-direction: column;
  overflow: hidden;
  font-family: Roboto, "Liberation Sans", sans-serif;
  font-size: 11px;
  color: #000;
  background: #e3eaf2;
}

button { border: 0; padding: 0; background: none; font: inherit; color: inherit; }
h1, h2 { margin: 0; font: inherit; }
svg { display: block; flex: none; }
.defs { position: absolute; width: 0; height: 0; }

/* Title and menu */
.titlebar, .menubar { background: #fff; font-size: 12px; }
.titlebar { display: flex; align-items: center; height: 24px; padding: 0 2px; }
.app-icon { width: 16px; height: 16px; }
.title { margin-left: 5px; }
.window-buttons { display: flex; margin-left: auto; align-self: stretch; }
.window-buttons button { width: 46px; display: grid; place-items: center; }
.window-buttons svg { width: 12px; height: 12px; fill: none; stroke: #111; }
.menubar { display: flex; gap: 13px; height: 17px; padding: 0 7px; align-items: center; }

/* Toolbars */
.toolbars { display: flex; gap: 4px; height: 29px; padding-top: 1px; border-top: 1px solid #f0f0f0; }
.toolbar { display: flex; align-items: flex-start; padding: 2px 4px 0 10px; position: relative; background: linear-gradient(#e7f3f8, #cfe6f2 60%, #acd0e5); }
.toolbar::before, .status-seg::before {
  content: ""; position: absolute; left: 4px; top: 1px; bottom: 0; width: 2px;
  background: repeating-linear-gradient(#a9bac4 0 2px, transparent 2px 4px);
}
.toolbar button { width: 21px; height: 22px; display: grid; place-items: center; }
.toolbar button svg, .rail button svg { width: 16px; height: 16px; }
.toolbar .active, .rail .active { background: #b9d6e6; outline: 1px solid #6f9fbd; outline-offset: -1px; }
.toolbar .sep { width: 2px; height: 18px; margin: 2px 3px; background: #a8b0b8; border-right: 1px solid #fff; }

/* Lettering inside icons */
.badge-text, .dollar, .question, .prop-mark, .label-glyph, .symbol-mark, .info-mark { text-anchor: middle; font-family: "Liberation Sans", sans-serif; }
.badge-text { font-size: 7px; fill: #fff; }
.badge-text.small { font-size: 6px; }
.dollar { font-size: 11px; fill: #8a7a18; }
.question { font-size: 14px; font-weight: 700; fill: #fff; }
.prop-mark { font-size: 8px; fill: #666; }
.label-glyph { font-size: 8px; fill: #0858a8; }
.symbol-mark { font-size: 13px; font-weight: 700; fill: #111; }
.info-mark { font-size: 11px; font-weight: 700; fill: #fff; }

/* Document tabs */
.tabs { height: 33px; display: flex; padding-top: 4px; border-bottom: 6px solid #b3d4e9; box-shadow: inset 0 -1px #6c9fbf; }
.tab { position: relative; display: flex; align-items: center; width: 180px; height: 22px; padding-left: 20px; gap: 7px; }
.tab > * { position: relative; }
.tab .tab-shape { position: absolute; left: 0; top: 0; width: 100%; height: 23px; }
.tab-icon { width: 16px; height: 12px; }
.tab-name { font-weight: 700; font-size: 12px; color: #1c4868; text-decoration: none; white-space: nowrap; }
.tab-close { margin-left: 8px; }
.tab-close svg { width: 8px; height: 8px; }

/* Workspace */
.workspace { flex: 1; min-height: 0; display: flex; padding-right: 4px; background: linear-gradient(90deg, #e3eaf2 56px, #afcfe4 56px); }
.rail { align-self: flex-start; display: flex; flex-direction: column; align-items: center; position: relative; padding: 11px 0 2px; border-bottom: 1px solid #a0c4da; background: linear-gradient(90deg, #e7f3f8, #b5daee); }
.rail::before { content: ""; position: absolute; left: 1px; right: 1px; top: 3px; height: 2px; background: repeating-linear-gradient(90deg, #a9bac4 0 2px, transparent 2px 4px); }
.rail button { width: 22px; height: 22px; display: grid; place-items: center; }
.rail .sep { width: 22px; height: 3px; margin-bottom: 1px; background: #a0a8ae; border-bottom: 2px solid #f6fafc; }
.modes { width: 27px; padding-right: 3px; }
.orientation { width: 28px; margin-left: 1px; padding-right: 2px; }
.angle { width: 22px; height: 15px; margin: 2px 0 5px; border: 0; padding: 0; background: #fff; font: inherit; }
.rail .text-tool { font: bold 18px/22px "Liberation Serif", serif; color: #333; }

.side { width: 139px; display: flex; flex-direction: column; gap: 3px; margin-right: 4px; }
.overview { border: 1px solid #6a6a6a; background: #e0e0d0; box-shadow: inset 0 0 0 1px #aaa89c; }
.overview svg { width: 100%; height: auto; }
.picker { flex: 1; min-height: 0; display: flex; flex-direction: column; border: 2px solid #6e6e6e; border-width: 1px 2px 1px 1px; background: #fff; }
.picker-head { display: flex; align-items: center; gap: 5px; height: 24px; padding: 0 2px; border-bottom: 1px solid #777; background: linear-gradient(#e7f3f8, #aed3e9); }
.chip { width: 16px; height: 16px; border-radius: 3px; background: #2a8cf0; color: #fff; font-size: 14px; line-height: 16px; }
.picker-head h2 { flex: 1; padding-left: 4px; text-align: center; }
.picker-list { list-style: none; margin: 0; padding: 1px 0 0; line-height: 13px; overflow: hidden; }
.picker-list li { padding-left: 3px; }
.picker-list .selected { background: #0078d7; color: #fff; }

/* Schematic sheet */
.canvas { flex: 1; min-width: 0; border: 1px solid #5e5e58; overflow: hidden; }
.sheet { width: 100%; height: 100%; font-family: "Liberation Sans", Arial, sans-serif; }
.heading { font-size: 21px; font-weight: 700; fill: #800000; }
.wires { fill: none; stroke: #004000; stroke-width: 2; }
.junctions { stroke: #004000; stroke-width: 6; }
.pin-name, .value, .generator { font-size: 10px; fill: #101010; }
.generator { fill: #0000c0; }
.pin-no { font-size: 10px; fill: #202020; }
.end { text-anchor: end; }
.ref { font-size: 16px; fill: #202020; }
.high { fill: #ff4040; }
.low { fill: #4040ff; }
.floating { fill: #808080; }

/* Simulation status */
.statusbar { display: flex; gap: 4px; height: 29px; padding-top: 2px; background: #e3eaf2; }
.status-seg { position: relative; display: flex; align-items: center; background: linear-gradient(#edf6fa, #d0e5f1 60%, #a4cae0); }
.controls { width: 259px; padding-left: 11px; border-right: 1px solid #9fc0d4; white-space: nowrap; }
.controls button { width: 36px; display: grid; place-items: center; }
.controls svg { width: 16px; height: 16px; }
.controls .sep { width: 2px; height: 18px; margin: 0 9px 0 3px; background: #a0a8b0; border-right: 1px solid #fff; }
.controls .messages { width: auto; display: flex; align-items: center; gap: 5px; }
.progress { width: 413px; padding-left: 13px; color: #004000; border-right: 1px solid #9fc0d4; }
.coords { flex: 1; justify-content: flex-end; padding-right: 2px; }
.coord-x { margin-right: auto; padding-left: 297px; }
.unit { margin-left: 17px; color: #000080; }

/* Taskbar */
.taskbar { display: grid; grid-template-columns: 1fr auto 1fr; height: 48px; padding-left: 1px; background: linear-gradient(90deg, #52a8da, #52a9df 15%, #50b0f6 24%, #54a9ef 50%, #54a9ee 68%, #52a8da 82%); }
.apps { grid-column: 2; display: flex; gap: 4px; align-items: center; }
.apps button { position: relative; width: 40px; height: 40px; display: grid; place-items: center; border-radius: 4px; }
.apps svg { width: 24px; height: 24px; }
.apps .open::after { content: ""; position: absolute; bottom: 1px; width: 6px; height: 3px; border-radius: 2px; background: #b9d9f0; }
.apps .current { background: #5fafe6; }
.apps .current::after { width: 16px; background: #38bdff; }
.tray { display: flex; align-items: center; justify-content: flex-end; gap: 8px; padding-right: 18px; color: #fff; }
.tray svg { width: 16px; height: 16px; fill: none; stroke: #fff; }
.chevron { margin-right: 8px; }
.clock { display: flex; flex-direction: column; align-items: flex-end; margin-left: 8px; font: 11px/16px "Open Sans", sans-serif; }
```
